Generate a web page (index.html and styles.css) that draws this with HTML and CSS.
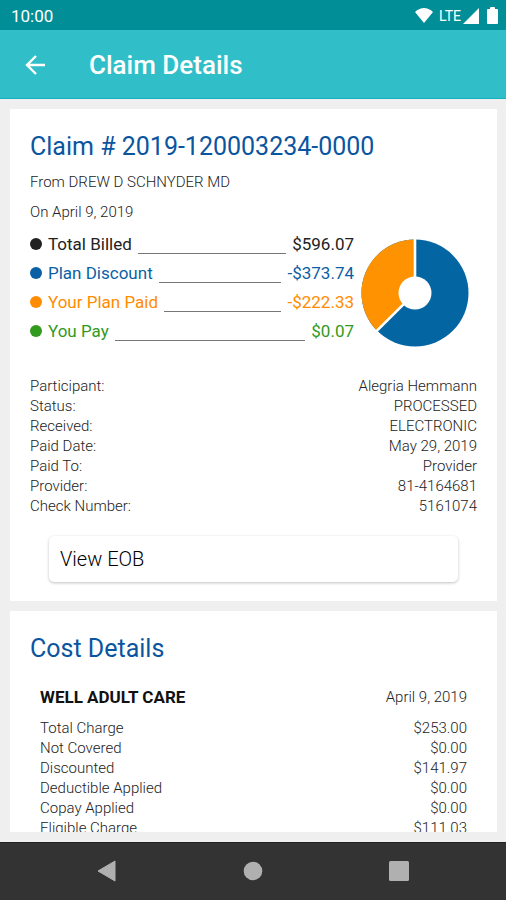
FILE: index.html
```html
<!DOCTYPE html>
<html lang="en">
<head>
<meta charset="utf-8">
<meta name="viewport" content="width=device-width, initial-scale=1">
<title>Claim Details</title>
<link rel="stylesheet" href="styles.css">
</head>
<body>
<div class="screen">
  <div class="status-bar">
    <span class="clock">10:00</span>
    <div class="status-icons">
      <svg class="wifi" width="20" height="17" viewBox="0 0 20 17"><path d="M1 5Q10-3 19 5L10 16Z" fill="#fff"/></svg>
      <span class="network">LTE</span>
      <svg class="signal" width="16" height="16" viewBox="0 0 16 16"><path d="M16 0V16H0Z" fill="#fff"/></svg>
      <svg class="battery" width="11" height="18" viewBox="0 0 11 18"><path d="M3 2V1Q3 0 4 0H7Q8 0 8 1V2H10Q11 2 11 3V16Q11 17 10 17H1Q0 17 0 16V3Q0 2 1 2Z" fill="#fff"/></svg>
    </div>
  </div>
  <header class="app-bar">
    <button class="back" type="button" aria-label="Back">
      <svg width="20" height="20" viewBox="0 0 20 20"><path d="M11 1L2 10L11 19M2 10H20" fill="none" stroke="#fff" stroke-width="2.4"/></svg>
    </button>
    <h1 class="app-title">Claim Details</h1>
  </header>
  <main class="content">
    <section class="card">
      <h2 class="card-title">Claim # 2019-120003234-0000</h2>
      <p class="note">From DREW D SCHNYDER MD</p>
      <p class="note">On April 9, 2019</p>
      <div class="summary">
        <ul class="legend">
          <li class="legend-row billed"><span class="dot"></span><span>Total Billed</span><span class="leader"></span><span>$596.07</span></li>
          <li class="legend-row discount"><span class="dot"></span><span>Plan Discount</span><span class="leader"></span><span>-$373.74</span></li>
          <li class="legend-row paid"><span class="dot"></span><span>Your Plan Paid</span><span class="leader"></span><span>-$222.33</span></li>
          <li class="legend-row pay"><span class="dot"></span><span>You Pay</span><span class="leader"></span><span>$0.07</span></li>
        </ul>
        <svg class="chart" width="110" height="110" viewBox="-55 -55 110 110" role="img" aria-label="Plan discount and plan paid shares">
          <circle r="53.5" fill="#0465a3"/>
          <path d="M0 0V-53.5A53.5 53.5 0 0 0-38 37.7Z" fill="#ff9200"/>
          <path d="M0-55V0L-40 39.6" fill="none" stroke="#fff" stroke-width="2.6"/>
          <circle r="16.5" fill="#fff"/>
        </svg>
      </div>
      <dl class="details">
        <div class="pair"><dt>Participant:</dt><dd>Alegria Hemmann</dd></div>
        <div class="pair"><dt>Status:</dt><dd>PROCESSED</dd></div>
        <div class="pair"><dt>Received:</dt><dd>ELECTRONIC</dd></div>
        <div class="pair"><dt>Paid Date:</dt><dd>May 29, 2019</dd></div>
        <div class="pair"><dt>Paid To:</dt><dd>Provider</dd></div>
        <div class="pair"><dt>Provider:</dt><dd>81-4164681</dd></div>
        <div class="pair"><dt>Check Number:</dt><dd>5161074</dd></div>
      </dl>
      <button class="eob" type="button">View EOB</button>
    </section>
    <section class="card cost-card">
      <h2 class="card-title">Cost Details</h2>
      <div class="service">
        <div class="pair service-head"><h3 class="service-name">WELL ADULT CARE</h3><span>April 9, 2019</span></div>
        <table class="costs">
          <tbody>
            <tr><th scope="row">Total Charge</th><td>$253.00</td></tr>
            <tr><th scope="row">Not Covered</th><td>$0.00</td></tr>
            <tr><th scope="row">Discounted</th><td>$141.97</td></tr>
            <tr><th scope="row">Deductible Applied</th><td>$0.00</td></tr>
            <tr><th scope="row">Copay Applied</th><td>$0.00</td></tr>
            <tr><th scope="row">Eligible Charge</th><td>$111.03</td></tr>
          </tbody>
        </table>
      </div>
    </section>
  </main>
  <nav class="nav-bar" aria-label="System">
    <button type="button" aria-label="Back"><svg width="20" height="22" viewBox="0 0 20 22"><path d="M18 1V21L1 11Z" fill="#b0b0b0" stroke="#b0b0b0" stroke-linejoin="round"/></svg></button>
    <button type="button" aria-label="Home"><svg width="20" height="20" viewBox="0 0 20 20"><circle cx="10" cy="10" r="9.3" fill="#b0b0b0"/></svg></button>
    <button type="button" aria-label="Recents"><svg width="20" height="20" viewBox="0 0 20 20"><rect width="20" height="20" rx="1.5" fill="#b0b0b0"/></svg></button>
  </nav>
</div>
</body>
</html>
```
FILE: styles.css
```css
* {
  box-sizing: border-box;
}

body,
h1,
h2,
h3,
p,
ul,
dl,
dd {
  margin: 0;
  padding: 0;
}

body {
  background: #efefef;
  color: #222;
  font-family: Roboto, sans-serif;
  font-size: 15px;
  font-weight: 300;
  line-height: 20px;
}

button {
  border: 0;
  background: none;
  padding: 0;
  font: inherit;
  color: inherit;
}

svg {
  display: block;
}

.screen {
  display: flex;
  flex-direction: column;
  height: 100vh;
}

.status-bar {
  display: flex;
  align-items: center;
  justify-content: space-between;
  height: 30px;
  padding: 1px 8px 0 11px;
  background: #018e96;
  color: #fff;
}

.clock {
  font-size: 17px;
  font-weight: 400;
}

.status-icons {
  display: flex;
  align-items: center;
}

.network {
  margin: 0 2px 0 5px;
  font-size: 14px;
  font-weight: 400;
}

.battery {
  margin-left: 8px;
}

.app-bar {
  display: flex;
  align-items: center;
  gap: 44px;
  height: 69px;
  padding: 2px 25px 0;
  border-bottom: 1px solid #12b0c0;
  background: #30bfc8;
  color: #fff;
}

.app-title {
  font-size: 26px;
  font-weight: 500;
  line-height: 30px;
}

.content {
  display: flex;
  flex: 1;
  flex-direction: column;
  gap: 10px;
  min-height: 0;
  padding: 10px 9px 10px 10px;
}

.card {
  flex: none;
  padding: 23px 20px 19px;
  background: #fff;
}

.cost-card {
  flex: 1;
  min-height: 0;
  overflow: hidden;
}

.card-title {
  margin-bottom: 10px;
  color: #0b559f;
  font-size: 25px;
  font-weight: 400;
  line-height: 30px;
}

.note {
  margin-bottom: 10px;
}

.summary {
  display: flex;
  align-items: flex-start;
  gap: 6px;
  margin: -3px 0 28px;
}

.legend {
  flex: 1;
  list-style: none;
  font-size: 17px;
  font-weight: 400;
}

.legend-row {
  display: flex;
  align-items: center;
  gap: 6px;
  height: 29px;
}

.dot {
  width: 12px;
  height: 12px;
  border-radius: 50%;
  background: currentColor;
}

.leader {
  flex: 1;
  align-self: flex-end;
  margin-bottom: 4px;
  border-bottom: 1px solid #777;
}

.discount {
  color: #0b5fa5;
}

.paid {
  color: #ff8c00;
}

.pay {
  color: #329a1c;
}

.chart {
  flex: none;
  margin: 9px 7px 0 0;
}

.pair {
  display: flex;
  justify-content: space-between;
}

.eob {
  display: block;
  width: calc(100% - 38px);
  height: 46px;
  margin: 20px 19px 0;
  padding: 0 11px;
  border-radius: 5px;
  background: #fff;
  box-shadow: 0 1px 3px rgba(0, 0, 0, 0.25);
  color: #000;
  font-size: 20px;
  text-align: left;
}

.service {
  padding: 13px 10px 0;
}

.service-head {
  margin-bottom: 11px;
}

.service-name {
  color: #111;
  font-size: 17px;
  font-weight: 700;
  line-height: 20px;
}

.costs {
  width: 100%;
  border-collapse: collapse;
}

.costs th,
.costs td {
  padding: 0;
  font-weight: 300;
  text-align: left;
}

.costs td {
  text-align: right;
}

.nav-bar {
  display: flex;
  align-items: center;
  justify-content: center;
  gap: 126px;
  height: 58px;
  padding-bottom: 2px;
  border-top: 1px solid #222;
  background: #333;
}
```
